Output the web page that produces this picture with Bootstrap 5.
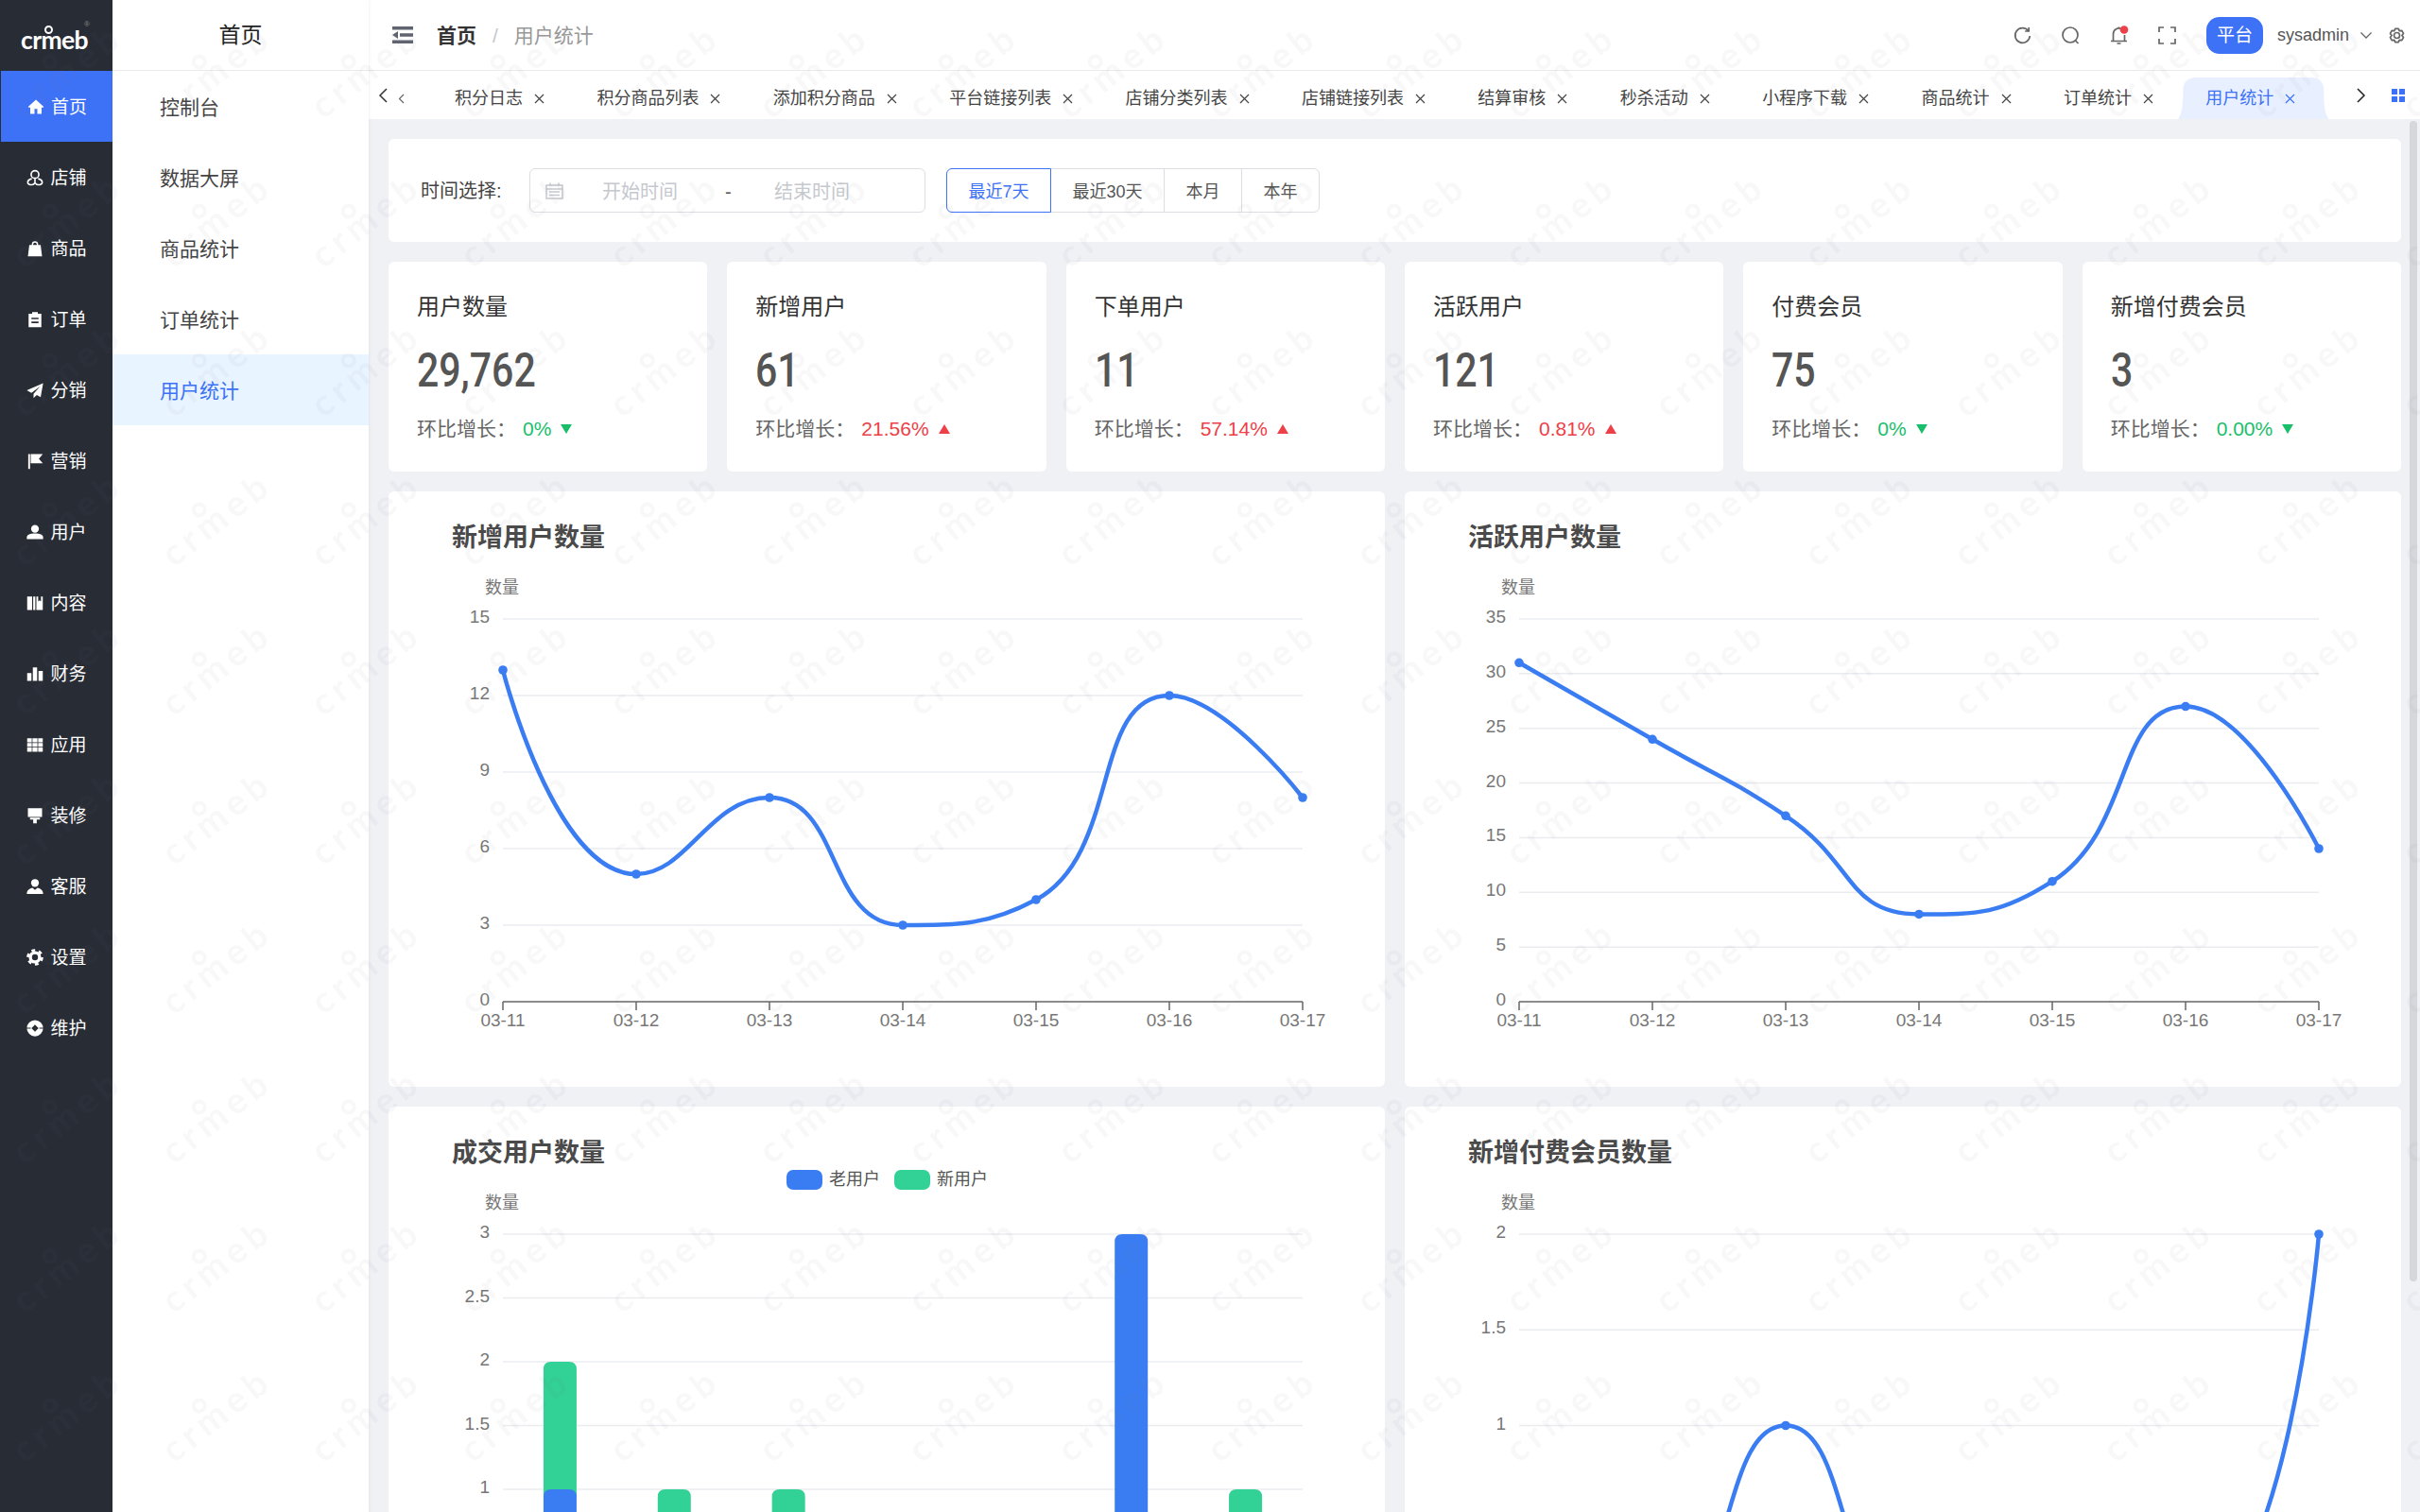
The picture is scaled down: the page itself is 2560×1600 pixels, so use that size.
<!DOCTYPE html>
<html lang="zh-CN">

<head>
    <meta charset="UTF-8">
    <meta name="viewport" content="width=device-width, initial-scale=1.0">
    <link href="https://cdn.jsdelivr.net/npm/bootstrap@5.3.3/dist/css/bootstrap.min.css" rel="stylesheet">
    <title>用户统计</title>
    <style>
        body {
            font-family: "Liberation Sans", "Noto Sans CJK SC", sans-serif;
            color: #555;
            background: #f0f1f5;
        }

        /* 左侧深色菜单 */
        .side-dark {
            width: 119px;
            background: #282c35;
        }

        .logo-box {
            height: 75px;
            position: relative;
        }

        .logo-word {
            position: absolute;
            left: 22px;
            top: 30px;
            font: 700 26.500px/24px Lato, sans-serif;
            letter-spacing: -.6px;
            color: #fff;
        }

        .logo-ring {
            position: absolute;
            left: 47px;
            top: 27px;
            width: 9px;
            height: 9px;
            border: 2px solid #fff;
            border-radius: 50%;
        }

        .logo-reg {
            position: absolute;
            left: 89px;
            top: 21px;
            font-size: 8px;
            line-height: 9px;
            color: #888;
        }

        .dark-link {
            height: 75px;
            padding: 3px 0 0 1px;
            gap: 7px;
            color: #fff;
            font-size: 19px;
        }

        .dark-link:hover,
        .dark-link:focus {
            color: #fff;
        }

        .dark-link svg {
            width: 18px;
            height: 18px;
            margin-top: -3px;
            fill: #fff;
            flex: none;
        }

        .dark-link.active {
            background: #3d71f6;
            margin-left: 1px;
        }

        /* 二级菜单 */
        .side-light {
            width: 271px;
            background: #fff;
            box-shadow: 1px 0 3px rgba(0, 0, 0, .05);
            z-index: 1;
        }

        .side-title {
            height: 75px;
            border-bottom: 1px solid #e9e9ec;
            font-size: 23px;
            color: #222;
        }

        .light-link {
            height: 75px;
            padding: 3px 0 0 50px;
            font-size: 21px;
            color: #444;
        }

        .light-link.active {
            background: #e8f4ff;
            color: #3d71f6;
        }

        /* 顶部 */
        .top-bar {
            height: 75px;
            background: #fff;
            border-bottom: 1px solid #e9e9ec;
            padding: 0 15px 0 25px;
        }

        .burger {
            width: 22px;
            height: 18px;
            margin-right: 25px;
        }

        .crumbs {
            --bs-breadcrumb-margin-bottom: 0;
            --bs-breadcrumb-item-padding-x: 17px;
            --bs-breadcrumb-divider-color: #c5c8ce;
            --bs-breadcrumb-item-active-color: #999;
            padding-top: 2px;
            font-size: 21px;
            line-height: 30px;
        }

        .crumbs .breadcrumb-item:first-child {
            font-weight: 700;
            color: #333;
        }

        .top-icon {
            width: 19px;
            height: 19px;
            margin-right: 32px;
            fill: none;
            stroke: #666;
            stroke-width: 1.7;
            overflow: visible;
        }

        .top-chevron {
            width: 12px;
            height: 7px;
            margin-right: 17px;
            stroke-width: 1.300;
        }

        .plat-btn {
            width: 60px;
            height: 39px;
            padding: 0;
            border: 0;
            border-radius: 14px;
            background: #3d71f6;
            color: #fff;
            font-size: 19px;
            line-height: 39px;
        }

        .user-name {
            font-size: 18px;
            color: #555;
            margin: 0 12px 0 15px;
        }

        /* 标签页 */
        .tab-bar {
            height: 51px;
            background: #fff;
        }

        .tab-left {
            width: 65px;
            padding-left: 10px;
            gap: 11px;
        }

        .tab-strip {
            gap: 3.400px;
        }

        .tab-one {
            position: relative;
            height: 44px;
            padding: 0 26px;
            gap: 12px;
            font-size: 18px;
            color: #444;
        }

        .tab-one svg {
            width: 11px;
            height: 11px;
            stroke: currentColor;
            stroke-width: 1.200;
        }

        .tab-one.tab-on {
            color: #3d71f6;
        }

        .tab-shape {
            position: absolute;
            left: -3px;
            bottom: 0;
            width: 159px;
            height: 44px;
            background: #e8f0ff;
            clip-path: path("M0 44C4 37 5 30 5 14Q5 0 19 0H140Q154 0 154 14C154 30 155 37 159 44Z");
        }

        .tab-txt {
            position: relative;
        }

        .tab-right {
            gap: 27px;
            padding-right: 16px;
        }

        /* 内容 */
        .page-body {
            position: relative;
            overflow: hidden;
            padding: 21px 20px 0 21px;
        }

        .bar-thumb {
            position: absolute;
            top: 2px;
            right: 3px;
            width: 8px;
            height: 1228px;
            border-radius: 4px;
            background: #d6d7db;
        }

        .soft-card {
            background: #fff;
            border: 0;
            border-radius: 6px;
        }

        .filter-card {
            height: 109px;
            padding-left: 34px;
            margin-bottom: 21px;
        }

        .filter-label {
            width: 115px;
            font-size: 20px;
            color: #444;
        }

        .date-box {
            width: 419px;
            height: 47px;
            padding-left: 16px;
            margin-right: 22px;
            border: 1px solid #dcdee2;
            border-radius: 6px;
            font-size: 20px;
            color: #c5c8ce;
        }

        .date-box span {
            margin-top: 3px;
        }

        .date-start {
            margin: 0 50px 0 41px;
        }

        .date-dash {
            width: 6px;
            margin-right: 46px;
            color: #555;
        }

        .range-btn {
            --bs-btn-padding-x: 22.500px;
            --bs-btn-padding-y: 0;
            --bs-btn-font-size: 18px;
            --bs-btn-color: #555;
            --bs-btn-border-color: #dcdee2;
            --bs-btn-hover-color: #555;
            --bs-btn-hover-bg: #fff;
            --bs-btn-hover-border-color: #dcdee2;
            --bs-btn-border-radius: 6px;
            height: 47px;
            padding-top: 3px;
            line-height: 42px;
        }

        .btn-group .range-btn.range-on {
            color: #3d71f6;
            border-color: #3d71f6;
            z-index: 1;
        }

        .gap-row {
            --bs-gutter-x: 21px;
            --bs-gutter-y: 21px;
        }

        .stat-card {
            height: 222px;
            padding: 31px 0 0 30px;
        }

        .stat-title {
            font-size: 24px;
            line-height: 34px;
            color: #333;
        }

        .stat-num {
            display: block;
            margin-top: 20px;
            font: 500 50px/60px Roboto, sans-serif;
            color: #555;
            transform: scaleX(.82);
            transform-origin: left;
        }

        .stat-rate {
            margin-top: 17px;
            font-size: 21px;
            line-height: 30px;
            color: #666;
        }

        .rate-up {
            color: #ed4048;
        }

        .rate-down {
            color: #19be6b;
        }

        .rate-val {
            margin-left: 7px;
        }

        .tri {
            display: inline-block;
            margin-left: 10px;
            border-left: 6.500px solid transparent;
            border-right: 6.500px solid transparent;
        }

        .tri-up {
            border-bottom: 10px solid #ed4048;
        }

        .tri-down {
            border-top: 10px solid #19be6b;
        }

        .chart-card {
            height: 630px;
        }

        .chart-title {
            padding: 32px 0 0 67px;
            font-size: 27px;
            line-height: 34px;
            font-weight: 700;
            color: #4a4a4a;
        }

        .chart-svg {
            display: block;
            width: 1054px;
            height: 564px;
        }

        /* 水印 */
        .water-mark {
            position: fixed;
            inset: 0;
            width: 100%;
            height: 100%;
            pointer-events: none;
            z-index: 5;
        }
    </style>
</head>

<body class="vh-100 overflow-hidden d-flex">

    <!-- 一级菜单 -->
    <div class="side-dark flex-shrink-0">
        <div class="logo-box">
            <span class="logo-word">crmeb</span>
            <span class="logo-ring"></span>
            <span class="logo-reg">®</span>
        </div>
        <nav class="nav flex-column">
            <a class="nav-link dark-link active d-flex align-items-center justify-content-center" href="#">
                <svg viewBox="0 0 24 24"><path d="M12 2 1 12l1.600 1.600L4 12.400V22h6v-7h4v7h6v-9.600l1.400 1.200L23 12z"/></svg>首页</a>
            <a class="nav-link dark-link d-flex align-items-center justify-content-center" href="#">
                <svg viewBox="0 0 24 24"><path fill="none" stroke="#fff" stroke-width="2.200" d="M12 2.100a5.400 5.400 0 1 0 0 10.800 5.400 5.400 0 0 0 0-10.800zM12 13v5M7.500 13.500C4 14.500 1.800 16.500 1.800 18.500c0 2.200 3 3.500 6 3.500 2 0 3-1 4.200-3 1 2 2.200 3 4.200 3 3 0 6-1.300 6-3.500 0-2-2.200-4-5.700-5"/></svg>店铺</a>
            <a class="nav-link dark-link d-flex align-items-center justify-content-center" href="#">
                <svg viewBox="0 0 24 24"><path d="M7.500 7V6a4.500 4.500 0 0 1 9 0v1H20l2 16H2L4 7zM9.500 7h5V6a2.500 2.500 0 0 0-5 0z" fill-rule="evenodd"/></svg>商品</a>
            <a class="nav-link dark-link d-flex align-items-center justify-content-center" href="#">
                <svg viewBox="0 0 24 24"><path d="M3 4h5V1.500h8V4h5v19H3zM7 9.500v2.200h10V9.500zM7 15v2.200h10V15z" fill-rule="evenodd"/></svg>订单</a>
            <a class="nav-link dark-link d-flex align-items-center justify-content-center" href="#">
                <svg viewBox="0 0 24 24"><path d="M23.500 2 .5 12l6.500 3.500L19 6.500l-9 10.500v6l4.500-4.500 5.500 3z"/></svg>分销</a>
            <a class="nav-link dark-link d-flex align-items-center justify-content-center" href="#">
                <svg viewBox="0 0 24 24"><path d="M2.500 2H5v21H2.500zM6 2h17l-5.500 6.500L23 15H6z"/></svg>营销</a>
            <a class="nav-link dark-link d-flex align-items-center justify-content-center" href="#">
                <svg viewBox="0 0 24 24"><circle cx="12" cy="7.500" r="5.500"/><path d="M.5 22v-2.500c0-4 5-5.500 11.500-5.500s11.500 1.500 11.500 5.500V22z"/></svg>用户</a>
            <a class="nav-link dark-link d-flex align-items-center justify-content-center" href="#">
                <svg viewBox="0 0 24 24"><path d="M1 3h7v19H1zM9.500 3h3v19h-3zM14 3h2.500v7l2-1.800 2 1.800V3H23v19h-9z"/></svg>内容</a>
            <a class="nav-link dark-link d-flex align-items-center justify-content-center" href="#">
                <svg viewBox="0 0 24 24"><path d="M1 11h6v11H1zM9 3h6v19H9zM17 8h6v14h-6z"/></svg>财务</a>
            <a class="nav-link dark-link d-flex align-items-center justify-content-center" href="#">
                <svg viewBox="0 0 24 24"><path d="M1 3h6.500v5.500H1zM8.500 3h7v5.500h-7zM16.500 3H23v5.500h-6.500zM1 9.500h6.500V15H1zM8.500 9.500h7V15h-7zM16.500 9.500H23V15h-6.500zM1 16h6.500v6H1zM8.500 16h7v6h-7zM16.500 16H23v6h-6.500z"/></svg>应用</a>
            <a class="nav-link dark-link d-flex align-items-center justify-content-center" href="#">
                <svg viewBox="0 0 24 24"><path d="M2 1.500h20V14H2zM5 15h14v2.500h-4.500V23h-5v-5.500H5z"/></svg>装修</a>
            <a class="nav-link dark-link d-flex align-items-center justify-content-center" href="#">
                <svg viewBox="0 0 24 24"><circle cx="12" cy="7" r="5.500"/><path d="M.5 22.500c0-5 4-8 8-8.500l3.500 3 3.500-3c4 .5 8 3.500 8 8.500z"/></svg>客服</a>
            <a class="nav-link dark-link d-flex align-items-center justify-content-center" href="#">
                <svg viewBox="0 0 24 24"><circle cx="12" cy="12" r="6.500" fill="none" stroke="#fff" stroke-width="4.500"/><circle cx="12" cy="12" r="10" fill="none" stroke="#fff" stroke-width="3.500" stroke-dasharray="5.200 5.270"/></svg>设置</a>
            <a class="nav-link dark-link d-flex align-items-center justify-content-center" href="#">
                <svg viewBox="0 0 24 24"><path d="M12 .5a11.500 11.500 0 1 1 0 23 11.500 11.500 0 0 1 0-23zM12 7l-5 5 5 5 5-5z" fill-rule="evenodd"/><path d="M0 12h6M18 12h6" stroke="#282c35" stroke-width="1.500"/></svg>维护</a>
        </nav>
    </div>

    <!-- 二级菜单 -->
    <div class="side-light flex-shrink-0">
        <div class="side-title d-flex align-items-center justify-content-center">首页</div>
        <nav class="nav flex-column">
            <a class="nav-link light-link d-flex align-items-center" href="#">控制台</a>
            <a class="nav-link light-link d-flex align-items-center" href="#">数据大屏</a>
            <a class="nav-link light-link d-flex align-items-center" href="#">商品统计</a>
            <a class="nav-link light-link d-flex align-items-center" href="#">订单统计</a>
            <a class="nav-link light-link active d-flex align-items-center" href="#">用户统计</a>
        </nav>
    </div>

    <div class="flex-grow-1 d-flex flex-column overflow-hidden">
        <!-- 顶部 -->
        <header class="top-bar d-flex align-items-center flex-shrink-0">
            <svg class="burger" viewBox="0 0 22 18" fill="#5f6470"><path d="M0 0h22v3.500H0zM0 14.500h22V18H0zM8 7.200h14v3.500H8zM0 9l6-4v8z"/></svg>
            <ol class="breadcrumb crumbs">
                <li class="breadcrumb-item">首页</li>
                <li class="breadcrumb-item active">用户统计</li>
            </ol>
            <div class="ms-auto d-flex align-items-center">
                <svg class="top-icon" viewBox="0 0 19 19"><path d="M15.500 4.500A7.800 7.800 0 1 0 17.300 10M16.200 1v4h-4"/></svg>
                <svg class="top-icon" viewBox="0 0 19 19"><circle cx="9" cy="9" r="8"/><path d="m14.500 15 3 3"/></svg>
                <svg class="top-icon" viewBox="0 0 19 19"><path d="M1 15.500h17M3.500 15.500V8a6 6 0 0 1 9-5.200M15.500 9v6.500M7.500 18h4M9.500 2V.5"/><circle cx="15" cy="3.500" r="4.300" fill="#ed4048" stroke="none"/></svg>
                <svg class="top-icon" viewBox="0 0 19 19"><path d="M1 6V1h5M13 1h5v5M18 13v5h-5M6 18H1v-5"/></svg>
                <button class="btn plat-btn" type="button">平台</button>
                <span class="user-name">sysadmin</span>
                <svg class="top-icon top-chevron" viewBox="0 0 12 7"><path d="m.5.5 5.500 5.500L11.500.5"/></svg>
                <svg class="top-icon m-0" viewBox="0 0 19 19" stroke-linejoin="round"><path d="m7.800 .8h3.400l1 2.400 2.600-.3 1.700 3-1.600 2.100 1.600 2.100-1.700 3-2.600-.3-1 2.400H7.800l-1-2.400-2.600.3-1.700-3L4.100 8 2.500 5.900l1.700-3 2.600.3z" transform="translate(0 1.500)"/><circle cx="9.500" cy="9.500" r="3"/></svg>
            </div>
        </header>

        <!-- 标签页 -->
        <div class="tab-bar d-flex flex-shrink-0 align-items-end">
            <div class="tab-left d-flex align-items-center align-self-stretch flex-shrink-0">
                <svg width="10" height="16" viewBox="0 0 10 16" fill="none" stroke="#333" stroke-width="1.500"><path d="M9 1 2 8l7 7"/></svg>
                <svg class="mt-2" width="7" height="11" viewBox="0 0 7 11" fill="none" stroke="#666" stroke-width="1.200"><path d="M6 1 1.500 5.500 6 10"/></svg>
            </div>
            <div class="tab-strip d-flex">
                <div class="tab-one d-flex align-items-center"><span class="tab-txt">积分日志</span><svg class="tab-txt" viewBox="0 0 11 11"><path d="m1 1 9 9M10 1l-9 9"/></svg></div>
                <div class="tab-one d-flex align-items-center"><span class="tab-txt">积分商品列表</span><svg class="tab-txt" viewBox="0 0 11 11"><path d="m1 1 9 9M10 1l-9 9"/></svg></div>
                <div class="tab-one d-flex align-items-center"><span class="tab-txt">添加积分商品</span><svg class="tab-txt" viewBox="0 0 11 11"><path d="m1 1 9 9M10 1l-9 9"/></svg></div>
                <div class="tab-one d-flex align-items-center"><span class="tab-txt">平台链接列表</span><svg class="tab-txt" viewBox="0 0 11 11"><path d="m1 1 9 9M10 1l-9 9"/></svg></div>
                <div class="tab-one d-flex align-items-center"><span class="tab-txt">店铺分类列表</span><svg class="tab-txt" viewBox="0 0 11 11"><path d="m1 1 9 9M10 1l-9 9"/></svg></div>
                <div class="tab-one d-flex align-items-center"><span class="tab-txt">店铺链接列表</span><svg class="tab-txt" viewBox="0 0 11 11"><path d="m1 1 9 9M10 1l-9 9"/></svg></div>
                <div class="tab-one d-flex align-items-center"><span class="tab-txt">结算审核</span><svg class="tab-txt" viewBox="0 0 11 11"><path d="m1 1 9 9M10 1l-9 9"/></svg></div>
                <div class="tab-one d-flex align-items-center"><span class="tab-txt">秒杀活动</span><svg class="tab-txt" viewBox="0 0 11 11"><path d="m1 1 9 9M10 1l-9 9"/></svg></div>
                <div class="tab-one d-flex align-items-center"><span class="tab-txt">小程序下载</span><svg class="tab-txt" viewBox="0 0 11 11"><path d="m1 1 9 9M10 1l-9 9"/></svg></div>
                <div class="tab-one d-flex align-items-center"><span class="tab-txt">商品统计</span><svg class="tab-txt" viewBox="0 0 11 11"><path d="m1 1 9 9M10 1l-9 9"/></svg></div>
                <div class="tab-one d-flex align-items-center"><span class="tab-txt">订单统计</span><svg class="tab-txt" viewBox="0 0 11 11"><path d="m1 1 9 9M10 1l-9 9"/></svg></div>
                <div class="tab-one tab-on d-flex align-items-center"><span class="tab-shape"></span><span class="tab-txt">用户统计</span><svg class="tab-txt" viewBox="0 0 11 11"><path d="m1 1 9 9M10 1l-9 9"/></svg></div>
            </div>
            <div class="tab-right ms-auto d-flex align-items-center align-self-stretch">
                <svg width="10" height="16" viewBox="0 0 10 16" fill="none" stroke="#222" stroke-width="1.500"><path d="m1 1 7 7-7 7"/></svg>
                <svg width="14" height="14" viewBox="0 0 15 15" fill="#3d71f6"><path d="M0 0h6.500v6.500H0zM8.500 0H15v6.500H8.500zM0 8.500h6.500V15H0zM8.500 8.500H15V15H8.500z"/></svg>
            </div>
        </div>

        <!-- 内容 -->
        <main class="page-body flex-grow-1">
            <div class="bar-thumb"></div>

            <div class="soft-card filter-card d-flex align-items-center">
                <span class="filter-label">时间选择:</span>
                <div class="date-box d-flex align-items-center">
                    <svg width="19" height="18" viewBox="0 0 19 18" fill="none" stroke="#c5c8ce" stroke-width="1.500"><path d="M1 3h17v14H1zM1 7h17M5 .5V4M14 .5V4M4 10h11M4 13.500h11"/></svg>
                    <span class="date-start">开始时间</span>
                    <span class="date-dash">-</span>
                    <span>结束时间</span>
                </div>
                <div class="btn-group">
                    <button type="button" class="btn range-btn range-on">最近7天</button>
                    <button type="button" class="btn range-btn">最近30天</button>
                    <button type="button" class="btn range-btn">本月</button>
                    <button type="button" class="btn range-btn">本年</button>
                </div>
            </div>

            <div class="row gap-row">
                <div class="col-2"><div class="soft-card stat-card">
                    <div class="stat-title">用户数量</div><span class="stat-num">29,762</span>
                    <div class="stat-rate d-flex align-items-center">环比增长：<span class="rate-val rate-down">0%</span><i class="tri tri-down"></i></div>
                </div></div>
                <div class="col-2"><div class="soft-card stat-card">
                    <div class="stat-title">新增用户</div><span class="stat-num">61</span>
                    <div class="stat-rate d-flex align-items-center">环比增长：<span class="rate-val rate-up">21.56%</span><i class="tri tri-up"></i></div>
                </div></div>
                <div class="col-2"><div class="soft-card stat-card">
                    <div class="stat-title">下单用户</div><span class="stat-num">11</span>
                    <div class="stat-rate d-flex align-items-center">环比增长：<span class="rate-val rate-up">57.14%</span><i class="tri tri-up"></i></div>
                </div></div>
                <div class="col-2"><div class="soft-card stat-card">
                    <div class="stat-title">活跃用户</div><span class="stat-num">121</span>
                    <div class="stat-rate d-flex align-items-center">环比增长：<span class="rate-val rate-up">0.81%</span><i class="tri tri-up"></i></div>
                </div></div>
                <div class="col-2"><div class="soft-card stat-card">
                    <div class="stat-title">付费会员</div><span class="stat-num">75</span>
                    <div class="stat-rate d-flex align-items-center">环比增长：<span class="rate-val rate-down">0%</span><i class="tri tri-down"></i></div>
                </div></div>
                <div class="col-2"><div class="soft-card stat-card">
                    <div class="stat-title">新增付费会员</div><span class="stat-num">3</span>
                    <div class="stat-rate d-flex align-items-center">环比增长：<span class="rate-val rate-down">0.00%</span><i class="tri tri-down"></i></div>
                </div></div>

                <div class="col-6"><div class="soft-card chart-card">
                    <div class="chart-title">新增用户数量</div><svg class="chart-svg" id="chart-new"></svg>
                </div></div>
                <div class="col-6"><div class="soft-card chart-card">
                    <div class="chart-title">活跃用户数量</div><svg class="chart-svg" id="chart-active"></svg>
                </div></div>
                <div class="col-6"><div class="soft-card chart-card">
                    <div class="chart-title">成交用户数量</div><svg class="chart-svg" id="chart-deal"></svg>
                </div></div>
                <div class="col-6"><div class="soft-card chart-card">
                    <div class="chart-title">新增付费会员数量</div><svg class="chart-svg" id="chart-vip"></svg>
                </div></div>
            </div>
        </main>
    </div>

    <!-- 水印 -->
    <svg class="water-mark">
        <defs>
            <pattern id="wm" width="158" height="158" patternUnits="userSpaceOnUse">
                <g transform="translate(26 127) rotate(-38)" fill="rgba(120,120,130,.05)">
                    <text font-family="Lato, sans-serif" font-weight="700" font-size="38" letter-spacing="6">crmeb</text>
                    <circle cx="59" cy="-32" r="6" fill="none" stroke="rgba(120,120,130,.05)" stroke-width="4"/>
                </g>
            </pattern>
        </defs>
        <rect width="100%" height="100%" fill="url(#wm)"/>
    </svg>

    <script>
        // 图表区域的坐标
        const LEFT = 121, RIGHT = 967, TOP = 69, BOTTOM = 474;
        const BLUE = '#3a7df3', GREEN = '#32d195', LABEL = '#777';
        // 第二排图表露出屏幕的高度，再往下的文字看不到
        const LOWER_VISIBLE = 363;
        const DAYS = ['03-11', '03-12', '03-13', '03-14', '03-15', '03-16', '03-17'];

        // 坐标轴和网格线
        function drawAxis(ticks, max, band, visible) {
            let out = `<text x="120" y="42" text-anchor="middle" font-size="18" fill="${LABEL}">数量</text>`;
            ticks.forEach(t => {
                const y = BOTTOM - t / max * (BOTTOM - TOP);
                if (t > 0) out += `<line x1="${LEFT}" x2="${RIGHT}" y1="${y}" y2="${y}" stroke="#eaecf0" stroke-width="1.500"/>`;
                if (y + 4 < visible) out += `<text x="107" y="${y + 4}" text-anchor="end" font-size="19" fill="${LABEL}">${t}</text>`;
            });
            if (BOTTOM > visible) return out;
            out += `<line x1="${LEFT}" x2="${RIGHT}" y1="${BOTTOM}" y2="${BOTTOM}" stroke="#666" stroke-width="1.500"/>`;
            const step = (RIGHT - LEFT) / (band ? 7 : 6);
            for (let i = 0; i <= (band ? 7 : 6); i++) {
                const x = LEFT + i * step;
                out += `<line x1="${x}" x2="${x}" y1="${BOTTOM}" y2="${BOTTOM + 9}" stroke="#666" stroke-width="1.500"/>`;
            }
            DAYS.forEach((d, i) => {
                const x = LEFT + (band ? (i + .5) : i) * step;
                out += `<text x="${x}" y="${BOTTOM + 26}" text-anchor="middle" font-size="19" fill="${LABEL}">${d}</text>`;
            });
            return out;
        }

        // 平滑曲线
        function smoothPath(pts) {
            const s = .5, clamp = (v, a, b) => Math.min(Math.max(v, Math.min(a, b)), Math.max(a, b));
            let d = `M${pts[0][0]} ${pts[0][1]}`, c0 = pts[0];
            for (let i = 1; i < pts.length; i++) {
                const [x, y] = pts[i], prev = pts[i - 1], next = pts[i + 1] || pts[i];
                let c1 = [x, y], nc = [x, y];
                if (pts[i + 1]) {
                    const vx = next[0] - prev[0], vy = next[1] - prev[1];
                    const lp = Math.hypot(x - prev[0], y - prev[1]), ln = Math.hypot(next[0] - x, next[1] - y);
                    const r = ln / (ln + lp);
                    nc = [clamp(x + vx * s * r, x, next[0]), clamp(y + vy * s * r, y, next[1])];
                    c1 = [clamp(x - (nc[0] - x) * lp / ln, prev[0], x), clamp(y - (nc[1] - y) * lp / ln, prev[1], y)];
                    nc = [x + (x - c1[0]) * ln / lp, y + (y - c1[1]) * ln / lp];
                }
                d += `C${c0[0]} ${c0[1]} ${c1[0]} ${c1[1]} ${x} ${y}`;
                c0 = nc;
            }
            return d;
        }

        function lineChart(id, data, ticks, visible) {
            const max = ticks[ticks.length - 1], step = (RIGHT - LEFT) / 6;
            const pts = data.map((v, i) => [LEFT + i * step, BOTTOM - v / max * (BOTTOM - TOP)]);
            let out = drawAxis(ticks, max, false, visible);
            out += `<path d="${smoothPath(pts)}" fill="none" stroke="${BLUE}" stroke-width="4.500"/>`;
            pts.forEach(p => { out += `<circle cx="${p[0]}" cy="${p[1]}" r="4.800" fill="${BLUE}"/>`; });
            document.getElementById(id).innerHTML = out;
        }

        function topBar(x, y, w, h, color) {
            return `<path d="M${x} ${y + h}V${y + 8}q0-8 8-8h${w - 16}q8 0 8 8V${y + h}z" fill="${color}"/>`;
        }

        function barChart(id, oldUser, newUser, ticks, visible) {
            const max = ticks[ticks.length - 1], step = (RIGHT - LEFT) / 7, unit = (BOTTOM - TOP) / max;
            let out = drawAxis(ticks, max, true, visible);
            oldUser.forEach((v, i) => {
                const x = LEFT + (i + .5) * step - 17.500;
                const oldTop = BOTTOM - v * unit, newTop = oldTop - newUser[i] * unit;
                if (newUser[i]) out += topBar(x, newTop, 35, newUser[i] * unit + 8, GREEN);
                if (v) out += topBar(x, oldTop, 35, v * unit, BLUE);
            });
            out += `<rect x="421" y="1" width="38" height="21" rx="7" fill="${BLUE}"/><text x="466" y="17" font-size="18" fill="#555">老用户</text>`;
            out += `<rect x="535" y="1" width="38" height="21" rx="7" fill="${GREEN}"/><text x="580" y="17" font-size="18" fill="#555">新用户</text>`;
            document.getElementById(id).innerHTML = out;
        }

        lineChart('chart-new', [13, 5, 8, 3, 4, 12, 8], [0, 3, 6, 9, 12, 15], 999);
        lineChart('chart-active', [31, 24, 17, 8, 11, 27, 14], [0, 5, 10, 15, 20, 25, 30, 35], 999);
        barChart('chart-deal', [1, 0, 0, 0, 0, 3, 0], [1, 1, 1, 0, 0, 0, 1], [0, .5, 1, 1.5, 2, 2.5, 3], LOWER_VISIBLE);
        lineChart('chart-vip', [0, 0, 1, 0, 0, 0, 2], [0, .5, 1, 1.5, 2], LOWER_VISIBLE);
    </script>
    <script src="https://cdn.jsdelivr.net/npm/bootstrap@5.3.3/dist/js/bootstrap.bundle.min.js"></script>
</body>

</html>
